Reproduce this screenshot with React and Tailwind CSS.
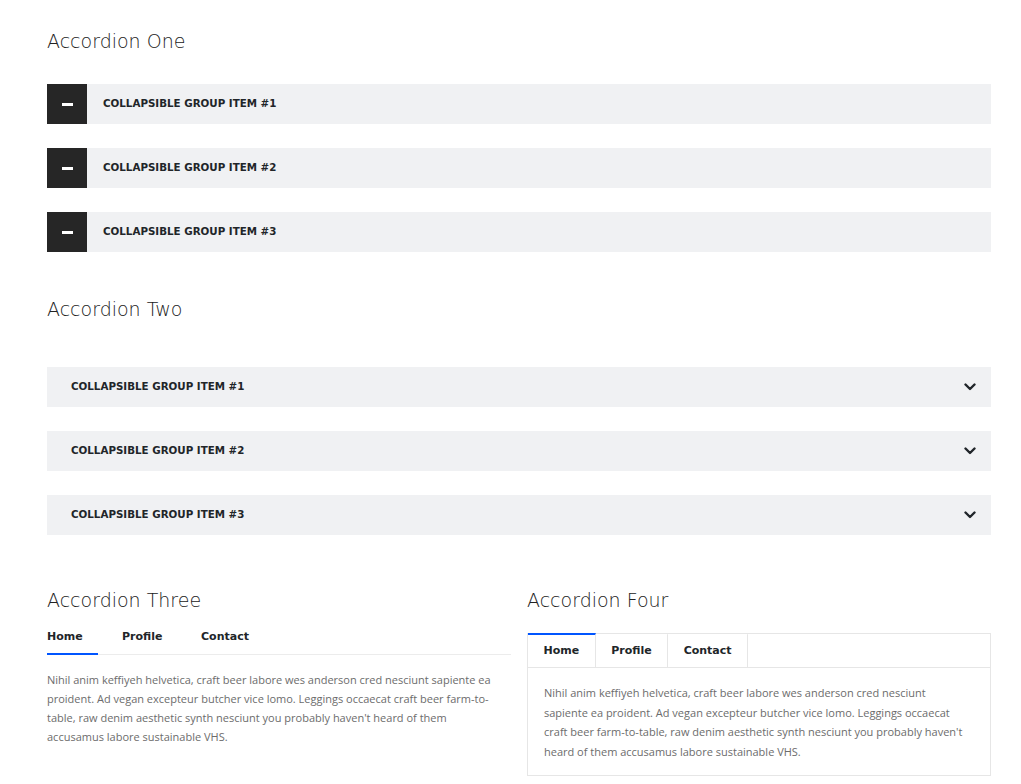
import React, { useState } from 'react';

const heading = "font-['DejaVu_Sans',sans-serif]";
const body = "font-['Open_Sans',sans-serif]";

const lorem =
    "Nihil anim keffiyeh helvetica, craft beer labore wes anderson cred nesciunt sapiente ea proident. Ad vegan excepteur butcher vice lomo. Leggings occaecat craft beer farm-to-table, raw denim aesthetic synth nesciunt you probably haven't heard of them accusamus labore sustainable VHS.";

const items = ['COLLAPSIBLE GROUP ITEM #1', 'COLLAPSIBLE GROUP ITEM #2', 'COLLAPSIBLE GROUP ITEM #3'];

function Chevron() {
    return (
        <svg width="12" height="8" viewBox="0 0 12 8" fill="none" stroke="#212529" strokeWidth="2.4" strokeLinecap="round" strokeLinejoin="round">
            <path d="M1.5 1.5 6 6l4.5-4.5" />
        </svg>
    );
}

export default function App() {
    const [tabA, setTabA] = useState('Home');
    const [tabB, setTabB] = useState('Home');
    const tabs = ['Home', 'Profile', 'Contact'];

    return (
        <div className={`bg-white w-[1021px] min-h-[784px] pl-[47px] pr-[30px] pt-[29px] text-[#212529] ${body}`}>
            <h2 className={`${heading} text-[19px] font-light leading-[24px] text-[#222]`}>Accordion One</h2>
            <div className="mt-[31px] flex flex-col gap-[24px]">
                {items.map((t) => (
                    <div key={t} className="flex h-[40px] bg-[#f0f1f3] items-center">
                        <div className="w-[40px] h-[40px] bg-[#262626] flex items-center justify-center">
                            <span className="block w-[11px] h-[3px] bg-white"></span>
                        </div>
                        <span className={`${heading} ml-[16px] text-[10.3px] font-bold`}>{t}</span>
                    </div>
                ))}
            </div>

            <h2 className={`${heading} mt-[45px] text-[19px] font-light leading-[24px] text-[#222]`}>Accordion Two</h2>
            <div className="mt-[46px] flex flex-col gap-[24px]">
                {items.map((t) => (
                    <div key={t} className="flex h-[40px] bg-[#f0f1f3] items-center justify-between pl-[24px] pr-[15px]">
                        <span className={`${heading} text-[10.3px] font-bold`}>{t}</span>
                        <Chevron />
                    </div>
                ))}
            </div>

            <div className="mt-[53px] grid grid-cols-2 gap-[16px]">
                <div>
                    <h2 className={`${heading} text-[19px] font-light leading-[24px] text-[#222]`}>Accordion Three</h2>
                    <div className="mt-[14px] flex border-b border-[#ececec]">
                        {tabs.map((t) => (
                            <button
                                key={t}
                                onClick={() => setTabA(t)}
                                className={`${heading} text-[11px] font-bold pt-[3px] pb-[7px] mr-[24px] px-0 border-b-2 -mb-[1px] ${tabA === t ? 'border-[#0055ff] w-[51px] text-left' : 'border-transparent'} ${t === 'Profile' ? 'w-[55px] text-left' : ''}`}
                            >
                                {t}
                            </button>
                        ))}
                    </div>
                    <p className="mt-[15px] text-[11px] leading-[19px] text-[#6c6c6c] pr-[10px]">{lorem}</p>
                </div>
                <div>
                    <h2 className={`${heading} text-[19px] font-light leading-[24px] text-[#222]`}>Accordion Four</h2>
                    <div className="mt-[21px] border border-[#e6e6e6]">
                        <div className="flex border-b border-[#e6e6e6]">
                            {tabs.map((t) => (
                                <button
                                    key={t}
                                    onClick={() => setTabB(t)}
                                    className={`${heading} h-[34px] px-[15.5px] text-[11px] font-bold border-r border-[#e6e6e6] border-t-2 -mt-[1px] ${tabB === t ? 'border-t-[#0055ff]' : 'border-t-transparent'}`}
                                >
                                    {t}
                                </button>
                            ))}
                        </div>
                        <p className="pl-[16px] pr-[20px] pt-[15px] pb-[14px] text-[11px] leading-[19.5px] text-[#6c6c6c]">{lorem}</p>
                    </div>
                </div>
            </div>
        </div>
    );
}
